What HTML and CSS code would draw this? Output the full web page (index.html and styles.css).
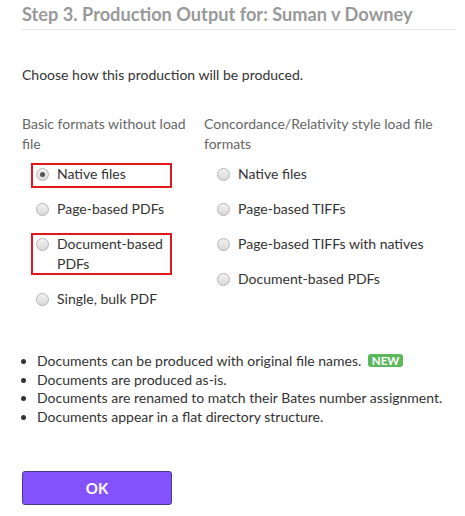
FILE: index.html
```html
<!DOCTYPE html>
<html>
<head>
<meta charset="utf-8">
<link rel="stylesheet" href="styles.css">
</head>
<body>
<div class="page">
  <h2 class="title">Step 3. Production Output for: Suman v Downey</h2>
  <p class="intro">Choose how this production will be produced.</p>
  <div class="cols">
    <div class="col col-left">
      <div class="col-head">Basic formats without load file</div>
      <div class="opts">
        <label class="opt hl"><span class="radio checked"></span><span class="lbl">Native files</span></label>
        <label class="opt"><span class="radio"></span><span class="lbl">Page-based PDFs</span></label>
        <label class="opt hl hl2"><span class="radio"></span><span class="lbl">Document-based PDFs</span></label>
        <label class="opt"><span class="radio"></span><span class="lbl">Single, bulk PDF</span></label>
      </div>
    </div>
    <div class="col col-right">
      <div class="col-head">Concordance/Relativity style load file formats</div>
      <div class="opts">
        <label class="opt"><span class="radio"></span><span class="lbl">Native files</span></label>
        <label class="opt"><span class="radio"></span><span class="lbl">Page-based TIFFs</span></label>
        <label class="opt"><span class="radio"></span><span class="lbl">Page-based TIFFs with natives</span></label>
        <label class="opt"><span class="radio"></span><span class="lbl">Document-based PDFs</span></label>
      </div>
    </div>
  </div>
  <ul class="notes">
    <li>Documents can be produced with original file names. <span class="badge">NEW</span></li>
    <li>Documents are produced as-is.</li>
    <li>Documents are renamed to match their Bates number assignment.</li>
    <li>Documents appear in a flat directory structure.</li>
  </ul>
  <button class="ok">OK</button>
</div>
</body>
</html>
```
FILE: styles.css
```css
html, body {
  margin: 0;
  padding: 0;
  background: #fff;
}
body {
  font-family: Lato, "Open Sans", sans-serif;
  font-size: 14px;
  color: #333;
}
.page {
  padding: 0 10px 0 22px;
}
.title {
  margin: 0;
  padding-top: 4px;
  padding-bottom: 5px;
  font-size: 18.2px;
  line-height: 20px;
  font-weight: 700;
  color: #999;
  border-bottom: 1px solid #e6e6e6;
}
.intro {
  margin: 35px 0 0 0;
  line-height: 20px;
}
.cols {
  display: grid;
  grid-template-columns: 182px 1fr;
  margin-top: 29px;
}
.col-head {
  line-height: 20px;
  color: #666;
  padding-right: 6px;
}
.col-right .col-head {
  padding-right: 0;
  width: 238px;
}
.opts {
  display: flex;
  flex-direction: column;
  gap: 15px;
  margin-top: 10px;
}
.opt {
  position: relative;
  display: flex;
  align-items: flex-start;
  margin-left: 9px;
  padding-left: 5px;
  width: 141px;
  box-sizing: border-box;
  line-height: 20px;
}
.col-right .opt {
  margin-left: 8px;
  width: auto;
}
.hl::after {
  content: "";
  position: absolute;
  left: 0;
  right: 0;
  top: -1px;
  bottom: -4px;
  border: 2px solid #e3161d;
}
.hl2::after {
  bottom: -1px;
}
.radio {
  flex: none;
  width: 11px;
  height: 11px;
  border-radius: 50%;
  border: 1px solid #b5b5b5;
  background: linear-gradient(#f2f2f2, #d8d8d8);
  margin-top: 4px;
  margin-right: 8px;
  position: relative;
}
.radio.checked::after {
  content: "";
  position: absolute;
  left: 3px;
  top: 3px;
  width: 5px;
  height: 5px;
  border-radius: 50%;
  background: #555;
}
.lbl {
  color: #333;
}
.notes {
  margin: 43px 0 0 0;
  padding-left: 15px;
  line-height: 18.7px;
}
.badge {
  display: inline-block;
  background: #5cb85c;
  color: #fff;
  font-weight: 700;
  font-size: 11.5px;
  line-height: 13px;
  padding: 0 4px;
  border-radius: 3px;
  margin-left: 3px;
  vertical-align: 1px;
}
.ok {
  display: block;
  margin-top: 44px;
  width: 150px;
  height: 34px;
  background: #8452fd;
  border: 1px solid #4c3a8e;
  border-radius: 3px;
  color: #fff;
  font-family: Lato, sans-serif;
  font-weight: 700;
  font-size: 15px;
  cursor: pointer;
}
```
